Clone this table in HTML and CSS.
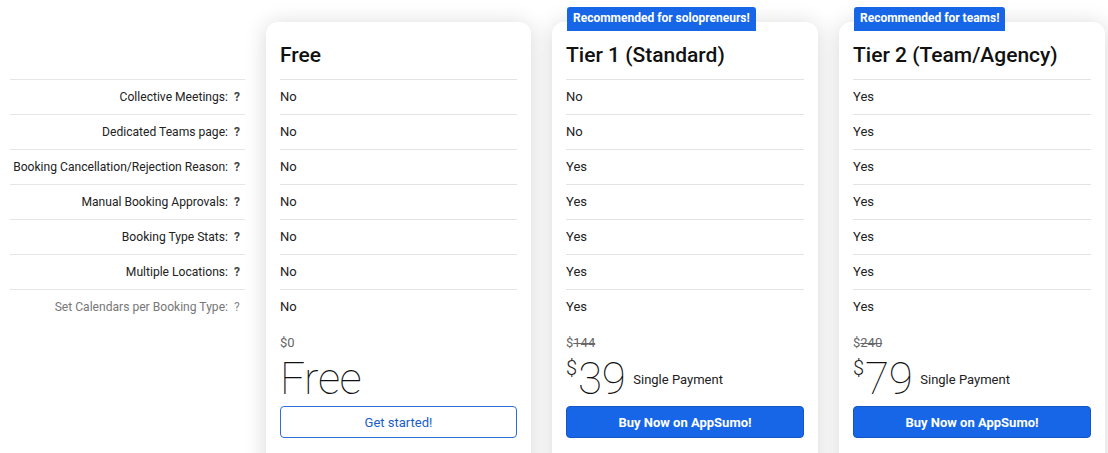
FILE: index.html
```html
<!DOCTYPE html>
<html>
<head>
<meta charset="utf-8">
<link rel="stylesheet" href="styles.css">
</head>
<body>
<div class="pricing">
  <div class="labels">
    <div class="label-row"><span>Collective Meetings:</span><b class="q">?</b></div>
    <div class="label-row"><span>Dedicated Teams page:</span><b class="q">?</b></div>
    <div class="label-row"><span>Booking Cancellation/Rejection Reason:</span><b class="q">?</b></div>
    <div class="label-row"><span>Manual Booking Approvals:</span><b class="q">?</b></div>
    <div class="label-row"><span>Booking Type Stats:</span><b class="q">?</b></div>
    <div class="label-row"><span>Multiple Locations:</span><b class="q">?</b></div>
    <div class="label-row muted"><span>Set Calendars per Booking Type:</span><b class="q">?</b></div>
  </div>

  <div class="card">
    <h2 class="title">Free</h2>
    <div class="feat">No</div>
    <div class="feat">No</div>
    <div class="feat">No</div>
    <div class="feat">No</div>
    <div class="feat">No</div>
    <div class="feat">No</div>
    <div class="feat">No</div>
    <div class="price">
      <div class="old">$0</div>
      <div class="big"><span class="num">Free</span></div>
      <button class="btn outline">Get started!</button>
    </div>
  </div>

  <div class="card">
    <div class="badge">Recommended for solopreneurs!</div>
    <h2 class="title">Tier 1 (Standard)</h2>
    <div class="feat">No</div>
    <div class="feat">No</div>
    <div class="feat">Yes</div>
    <div class="feat">Yes</div>
    <div class="feat">Yes</div>
    <div class="feat">Yes</div>
    <div class="feat">Yes</div>
    <div class="price">
      <div class="old">$<s>144</s></div>
      <div class="big"><sup class="cur">$</sup><span class="num">39</span><span class="per">Single Payment</span></div>
      <button class="btn solid">Buy Now on AppSumo!</button>
    </div>
  </div>

  <div class="card">
    <div class="badge">Recommended for teams!</div>
    <h2 class="title">Tier 2 (Team/Agency)</h2>
    <div class="feat">Yes</div>
    <div class="feat">Yes</div>
    <div class="feat">Yes</div>
    <div class="feat">Yes</div>
    <div class="feat">Yes</div>
    <div class="feat">Yes</div>
    <div class="feat">Yes</div>
    <div class="price">
      <div class="old">$<s>240</s></div>
      <div class="big"><sup class="cur">$</sup><span class="num">79</span><span class="per">Single Payment</span></div>
      <button class="btn solid">Buy Now on AppSumo!</button>
    </div>
  </div>
</div>
</body>
</html>
```

FILE: styles.css
```css
* { box-sizing: border-box; }
html, body { margin: 0; padding: 0; background: #fff; overflow: hidden; }
body {
  font-family: Roboto, "Liberation Sans", Arial, sans-serif;
  color: #222;
  height: 453px;
}
.pricing {
  display: grid;
  grid-template-columns: 235px 265px 266px 266px;
  column-gap: 21px;
  padding: 22px 0 0 10px;
  align-items: start;
}
.labels {
  padding-top: 57px;
}
.label-row {
  height: 35px;
  border-top: 1px solid #e6e6e6;
  display: flex;
  align-items: center;
  justify-content: flex-end;
  padding-right: 4px;
  font-size: 12.1px;
  white-space: nowrap;
  color: #222;
  gap: 6px;
}
.label-row.muted { color: #777; }
.label-row .q {
  font-size: 12px;
  font-weight: 700;
  color: #444;
  width: 7px;
}
.label-row.muted .q { font-weight: 400; color: #888; }

.card {
  position: relative;
  background: #fff;
  border-radius: 12px;
  box-shadow: 0 2px 22px rgba(0, 0, 0, 0.16);
  padding: 0 14px 40px;
  height: 460px;
}
.title {
  margin: 0;
  height: 57px;
  padding-top: 20px;
  font-size: 21px;
  line-height: 26px;
  font-weight: 500;
  color: #111;
}
.feat {
  height: 35px;
  border-top: 1px solid #e3e3e3;
  display: flex;
  align-items: center;
  padding-bottom: 1px;
  font-size: 13px;
  color: #222;
}
.feat:last-of-type { border-bottom: 1px solid #e3e3e3; }
.price { padding-top: 11px; }
.old {
  font-size: 13px;
  color: #666;
  line-height: 16px;
}
.old s { text-decoration-thickness: 1px; }
.big {
  display: flex;
  align-items: center;
  height: 46px;
  margin-top: 5px;
}
.num {
  font-size: 44px;
  font-weight: 100;
  line-height: 46px;
  color: #111;
  letter-spacing: -0.5px;
}
.cur {
  font-size: 20px;
  font-weight: 300;
  align-self: flex-start;
  line-height: 20px;
  margin-top: 2px;
  margin-right: 1px;
}
.per {
  font-size: 13px;
  margin-left: 8px;
  color: #222;
}
.btn {
  display: block;
  width: 100%;
  height: 32px;
  margin-top: 4px;
  border-radius: 4px;
  font-family: Roboto, "Liberation Sans", Arial, sans-serif;
  font-size: 13px;
  cursor: pointer;
}
.btn.outline {
  background: #fff;
  border: 1px solid #2b6fd6;
  color: #1a5cc8;
}
.btn.solid {
  background: #1766e7;
  border: 1px solid #1456c4;
  color: #fff;
  font-weight: 700;
}
.badge {
  position: absolute;
  top: -15px;
  left: 15px;
  height: 24px;
  padding: 0 6px;
  background: #1766e7;
  color: #fff;
  font-size: 12px;
  font-weight: 700;
  line-height: 22px;
  border-radius: 3px 3px 0 0;
}
```
